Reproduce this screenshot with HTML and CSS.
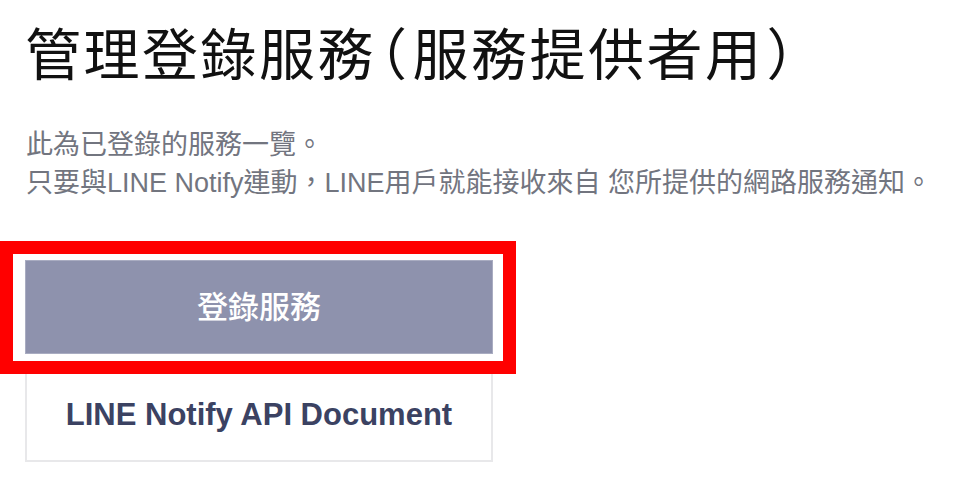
FILE: index.html
```html
<!DOCTYPE html>
<html lang="zh-Hant">
<head>
<meta charset="utf-8">
<title>管理登錄服務</title>
<link rel="stylesheet" href="styles.css">
</head>
<body>
<main class="page">
  <h1 class="title">管理登錄服務<span class="paren">（</span>服務提供者用<span class="paren">）</span></h1>
  <p class="desc">此為已登錄的服務一覽。<br>只要與LINE Notify連動，LINE用戶就能接收來自 您所提供的網路服務通知。</p>
  <div class="actions">
    <a class="btn btn-primary" href="#">登錄服務</a>
    <a class="btn btn-secondary" href="#">LINE Notify API Document</a>
  </div>
</main>
<div class="highlight"></div>
</body>
</html>
```
FILE: styles.css
```css
html, body {
  margin: 0;
  padding: 0;
  background: #ffffff;
}
body {
  position: relative;
  width: 954px;
  height: 493px;
  overflow: hidden;
  font-family: "Liberation Sans", "Noto Sans CJK TC", sans-serif;
}
.page {
  padding: 19px 0 0 25px;
}
.title {
  margin: 0;
  font-family: "Noto Sans CJK TC", sans-serif;
  font-weight: 400;
  font-size: 56px;
  line-height: 64px;
  color: #111111;
  white-space: nowrap;
  letter-spacing: 2.5px;
}
.paren {
  font-feature-settings: "halt" 1;
  margin: 0 3px;
}
.desc {
  margin: 43px 0 0 1px;
  font-size: 27px;
  line-height: 38px;
  color: #72757f;
  white-space: nowrap;
}
.actions {
  margin-top: 58px;
  display: flex;
  flex-direction: column;
  gap: 14px;
  width: 468px;
}
.btn {
  box-sizing: border-box;
  display: flex;
  align-items: center;
  justify-content: center;
  height: 94px;
  text-decoration: none;
  font-weight: 700;
}
.btn-primary {
  background: #8e92ad;
  border: 1px solid #a9acc1;
  color: #ffffff;
  font-family: "Noto Sans CJK TC", sans-serif;
  font-size: 31px;
  font-weight: 500;
  padding-bottom: 6px;
}
.btn-secondary {
  background: #ffffff;
  border: 2px solid #e8e8ea;
  color: #3b4262;
  font-size: 31px;
}
.highlight {
  position: absolute;
  left: 0;
  top: 241px;
  width: 516px;
  height: 133px;
  box-sizing: border-box;
  border: 13px solid #ff0000;
  pointer-events: none;
}
```
